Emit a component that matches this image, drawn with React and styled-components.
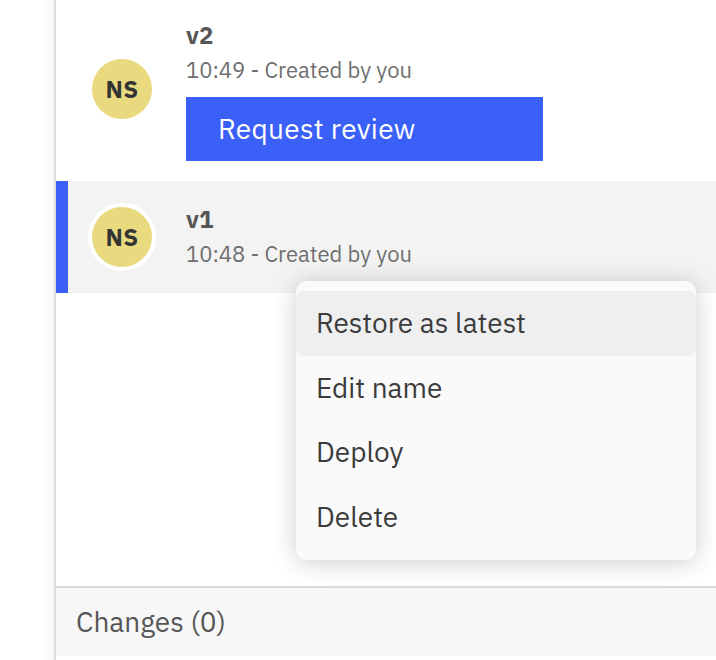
import React from "react";
import styled, { createGlobalStyle } from "styled-components";

const GlobalStyle = createGlobalStyle`
  *, *::before, *::after { box-sizing: border-box; }
  body { margin: 0; background: #fff; overflow: hidden; }
`;

const Page = styled.div`
  display: flex;
  width: 716px;
  height: 660px;
  overflow: hidden;
  background: #fff;
  font-family: "IBM Plex Sans", Roboto, sans-serif;
`;

const Gutter = styled.div`
  flex: 0 0 54px;
  background: linear-gradient(to left, #f7f7f7 0, #fbfbfb 5px, #fff 12px);
`;

const Panel = styled.main`
  flex: 1;
  display: flex;
  flex-direction: column;
  min-width: 0;
  border-left: 2px solid #dcdcdc;
`;

const VersionList = styled.section`
  flex: 1;
  display: flex;
  flex-direction: column;
  margin-top: -3px;
`;

const Version = styled.article`
  position: relative;
  display: flex;
  align-items: center;
  gap: 30px;
  height: ${(p) => (p.$selected ? 112 : 184)}px;
  padding-left: ${(p) => (p.$selected ? 20 : 32)}px;
  border-left: ${(p) => (p.$selected ? "12px solid #3a60f8" : "none")};
  background: ${(p) => (p.$selected ? "#f3f3f3" : "#fff")};
`;

const Avatar = styled.div`
  display: flex;
  align-items: center;
  justify-content: center;
  width: 68px;
  height: 68px;
  border: 4px solid #fff;
  border-radius: 50%;
  background: #e9da80;
  color: #343434;
  font-size: 24px;
  font-weight: 700;
  letter-spacing: 0.3px;
  line-height: 32px;
`;

const Details = styled.div`
  display: flex;
  flex-direction: column;
  align-items: flex-start;
`;

const Name = styled.h2`
  margin: 0;
  color: #565656;
  font-size: 24px;
  font-weight: 700;
  line-height: 34px;
`;

const Meta = styled.p`
  margin: 1px 0;
  color: #6f6f6f;
  font-size: 22px;
  line-height: 34px;
  white-space: nowrap;
`;

const ReviewButton = styled.button`
  width: 357px;
  height: 64px;
  margin: 9px 0 -1px;
  padding: 0 32px;
  border: 0;
  background: #3a60f8;
  color: #fff;
  font: 400 28px/36px "IBM Plex Sans", Roboto, sans-serif;
  letter-spacing: 0.32px;
  text-align: left;
`;

const Menu = styled.ul`
  position: absolute;
  z-index: 1;
  top: 100px;
  left: 228px;
  width: 400px;
  height: 279px;
  margin: 0;
  padding: 10px 0;
  list-style: none;
  border-radius: 10px;
  background: #fafafa;
  box-shadow: 0 2px 24px rgba(0, 0, 0, 0.2);
`;

const MenuItem = styled.li`
  display: flex;
  align-items: center;
  height: 64.6px;
  padding-left: 20px;
  border-radius: 6px;
  background: ${(p) => (p.$active ? "#efefef" : "transparent")};
  color: #3c3c3c;
  font-size: 28px;
  line-height: 36px;
`;

const Footer = styled.footer`
  display: flex;
  align-items: center;
  height: 70px;
  margin-bottom: 4px;
  padding-left: 20px;
  border-top: 2px solid #dcdcdc;
  background: #f7f7f7;
  color: #565656;
  font-size: 28px;
  line-height: 36px;
`;

const actions = [
  { label: "Restore as latest", active: true },
  { label: "Edit name" },
  { label: "Deploy" },
  { label: "Delete" },
];

export default function App() {
  return (
    <>
      <GlobalStyle />
      <Page>
        <Gutter />
        <Panel>
          <VersionList>
            <Version>
              <Avatar>NS</Avatar>
              <Details>
                <Name>v2</Name>
                <Meta>10:49 - Created by you</Meta>
                <ReviewButton>Request review</ReviewButton>
              </Details>
            </Version>
            <Version $selected>
              <Avatar>NS</Avatar>
              <Details>
                <Name>v1</Name>
                <Meta>10:48 - Created by you</Meta>
              </Details>
              <Menu>
                {actions.map(({ label, active }) => (
                  <MenuItem key={label} $active={active}>
                    {label}
                  </MenuItem>
                ))}
              </Menu>
            </Version>
          </VersionList>
          <Footer>Changes (0)</Footer>
        </Panel>
      </Page>
    </>
  );
}
